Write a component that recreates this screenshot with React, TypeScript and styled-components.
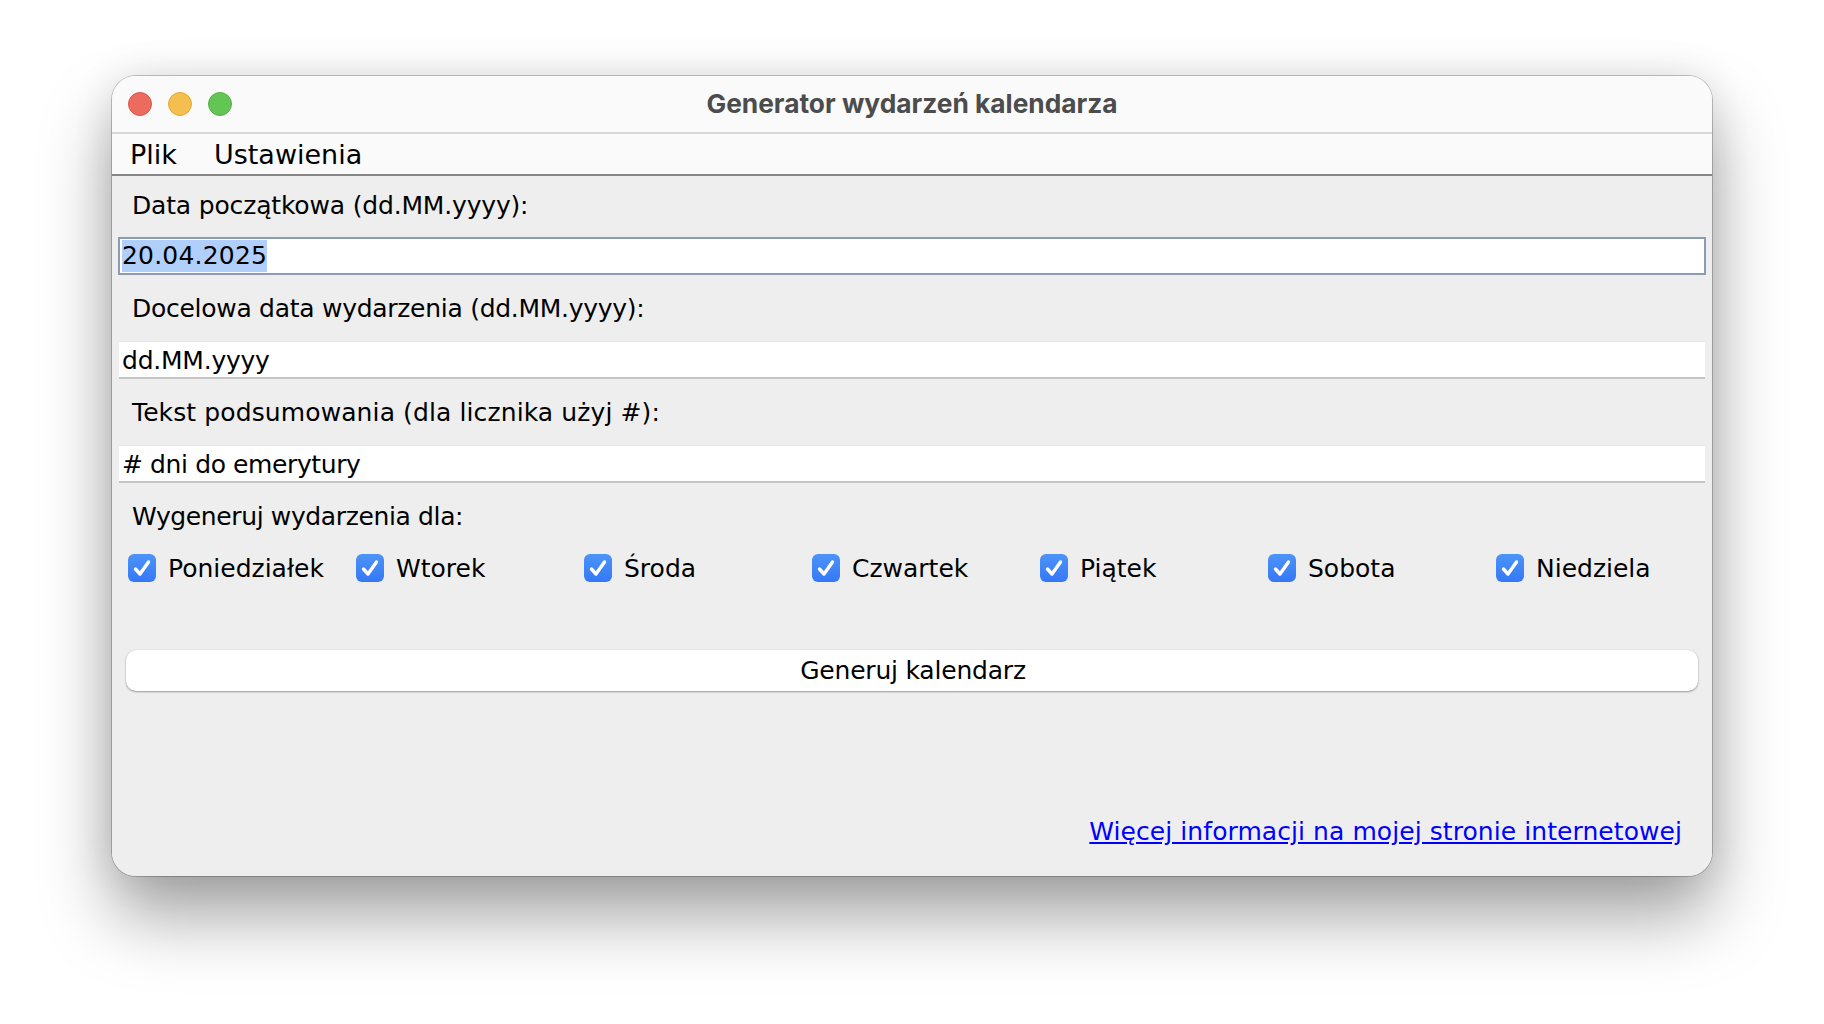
import React from "react";
import styled, { createGlobalStyle } from "styled-components";

const Global = createGlobalStyle`
  html, body { margin: 0; padding: 0; background: #fff; }
  body { width: 1824px; height: 1024px; overflow: hidden; font-family: "DejaVu Sans", "Liberation Sans", sans-serif; }
`;
const Page = styled.div`
  width: 1824px; height: 1024px; box-sizing: border-box; padding: 76px 112px 0;
`;
const Win = styled.div`
  width: 1600px; height: 800px; box-sizing: border-box; border-radius: 24px; overflow: hidden;
  display: flex; flex-direction: column; background: #eeeeee;
`;
const Frame = styled.div`
  width: 1600px; height: 800px; border-radius: 24px;
  box-shadow: 0 0 0 1px rgba(0,0,0,.22), 0 40px 70px rgba(0,0,0,.36), 0 0 40px rgba(0,0,0,.1);
`;
const TitleBar = styled.div`
  height: 56px; flex: none; background: #fafafa; border-bottom: 2px solid #d9d9d9; box-sizing: content-box;
  display: flex; align-items: center; position: relative; justify-content: center;
`;
const Lights = styled.div`
  position: absolute; left: 16px; top: 16px; display: flex; gap: 16px;
`;
const Light = styled.span<{ $c: string; $b: string }>`
  width: 24px; height: 24px; border-radius: 50%; box-sizing: border-box;
  background: ${p => p.$c}; border: 1px solid ${p => p.$b};
`;
const Title = styled.div`
  font: 700 26.3px Inter, "Liberation Sans", sans-serif; color: #4c4c4c; margin-bottom: 2px;
`;
const MenuBar = styled.div`
  height: 40px; flex: none; background: #fafafa; border-bottom: 2px solid #868686;
  display: flex; align-items: center; padding-left: 18px; gap: 37px;
`;
const MenuItem = styled.span`font-size: 27px; color: #000;`;
const Body = styled.div`
  flex: 1; display: flex; flex-direction: column; padding: 0 7px;
`;
const Label = styled.div<{ $first?: boolean; $track: number }>`
  height: ${p => p.$first ? 61 : 66}px; flex: none; box-sizing: border-box; display: flex; align-items: center; padding-left: 13px;
  padding-bottom: ${p => p.$first ? 3 : 0}px;
  font-size: 25px; color: #000; letter-spacing: ${p => p.$track}px;
`;
const Field = styled.div<{ $focus?: boolean; $track?: number }>`
  height: 38px; flex: none; box-sizing: border-box; background: #fff; display: flex; align-items: center;
  font-size: 25px; color: #000; letter-spacing: ${p => p.$track ?? 0}px;
  ${p => p.$focus
    ? "border: 2px solid #8b9bb0; margin: 0 -1px; padding-left: 2px;"
    : "border-top: 1px solid #e4e4e4; border-bottom: 2px solid #c4c4c4; padding: 2px 0 0 3px;"}
`;
const Sel = styled.span`display: block; background: #b0cffb; line-height: 32px;`;
const Days = styled.div`
  display: grid; grid-template-columns: repeat(7, 228px); height: 38px; flex: none; align-items: center; padding-left: 9px;
`;
const Day = styled.div`display: flex; align-items: center; gap: 12px; font-size: 25px; color: #000;`;
const Box = styled.span`
  width: 28px; height: 28px; border-radius: 6px; background: linear-gradient(#4d94f8, #3478f6); display: flex;
  align-items: center; justify-content: center; flex: none;
`;
const Btn = styled.button`
  display: block; flex: none; margin: 63px 7px 0 7px; height: 41px; border: 0; border-radius: 10px; background: #fff;
  box-shadow: 0 1px 2px rgba(0,0,0,.35), 0 0 1px rgba(0,0,0,.2); font: 25px "DejaVu Sans", sans-serif; color: #000; padding: 0 0 0 2px;
  letter-spacing: -0.2px;
`;
const Foot = styled.div`
  flex: 1; display: flex; justify-content: flex-end; align-items: flex-end; padding: 0 23px 30px 0;
`;
const Link = styled.a`color: #0000ff; font-size: 25px; text-decoration: underline; letter-spacing: 0.07px;`;

const days = ["Poniedziałek","Wtorek","Środa","Czwartek","Piątek","Sobota","Niedziela"];

export default function App() {
  return (
    <Page>
      <Global />
      <Frame>
      <Win>
        <TitleBar>
          <Lights>
            <Light $c="#ed6a5e" $b="#d9574c" />
            <Light $c="#f4bf4f" $b="#dfa83c" />
            <Light $c="#62c554" $b="#55b048" />
          </Lights>
          <Title>Generator wydarzeń kalendarza</Title>
        </TitleBar>
        <MenuBar><MenuItem>Plik</MenuItem><MenuItem>Ustawienia</MenuItem></MenuBar>
        <Body>
          <Label $first $track={-0.17}>Data początkowa (dd.MM.yyyy):</Label>
          <Field $focus $track={0.2}><Sel>20.04.2025</Sel></Field>
          <Label $track={-0.28}>Docelowa data wydarzenia (dd.MM.yyyy):</Label>
          <Field $track={-0.23}>dd.MM.yyyy</Field>
          <Label $track={0.11}>Tekst podsumowania (dla licznika użyj #):</Label>
          <Field $track={-0.39}># dni do emerytury</Field>
          <Label $track={-0.37}>Wygeneruj wydarzenia dla:</Label>
          <Days>
            {days.map(d => (
              <Day key={d}>
                <Box>
                  <svg width="20" height="20" viewBox="0 0 20 20" fill="none">
                    <path d="M3.5 11 L8 16 L16.5 4" stroke="#fff" strokeWidth="3.4" strokeLinecap="round" strokeLinejoin="round" />
                  </svg>
                </Box>
                {d}
              </Day>
            ))}
          </Days>
          <Btn>Generuj kalendarz</Btn>
          <Foot><Link href="#">Więcej informacji na mojej stronie internetowej</Link></Foot>
        </Body>
      </Win>
      </Frame>
    </Page>
  );
}
